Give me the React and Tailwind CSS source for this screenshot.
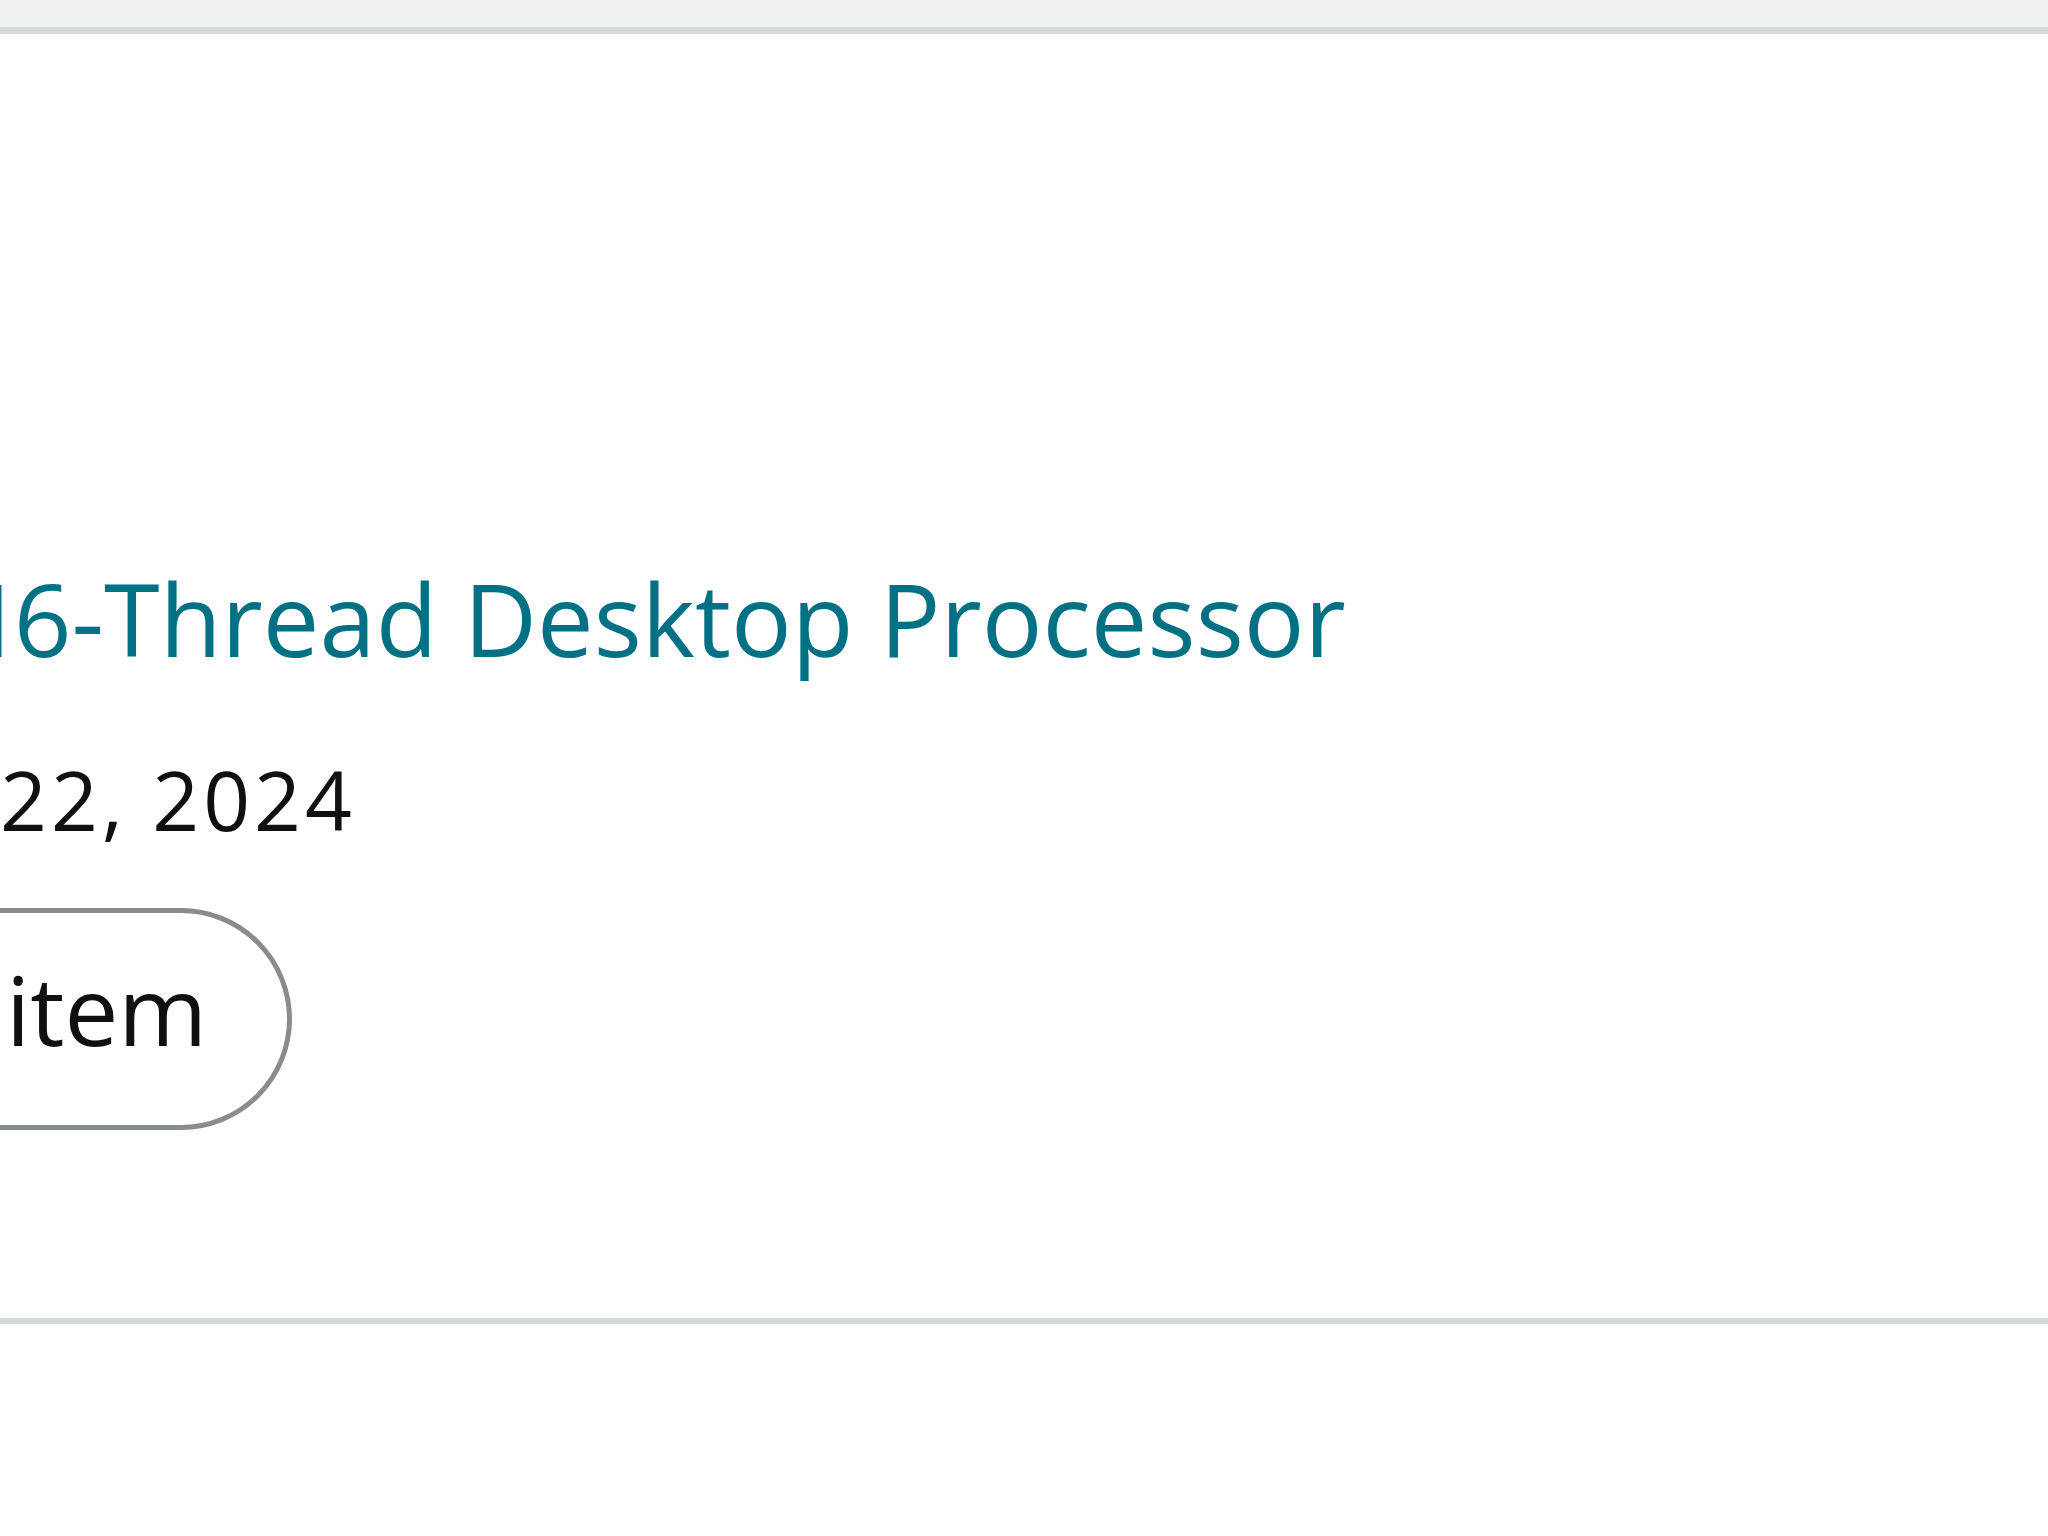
import React from "react";

const App = () => {
  return (
    <main className="w-[2048px] h-[1536px] overflow-hidden bg-white font-['Open_Sans',sans-serif]">
      <div className="h-[34px] bg-[#f0f2f2] border-b-[7px] border-[#d5d9d9]"></div>

      <section className="h-[1290px] border-b-[6px] border-[#d5d9d9] pt-[519px] flex flex-col items-start">
        <a className="block -ml-[34px] whitespace-nowrap text-[101px] leading-[130px] text-[#007185]">
          <span className="tracking-[-10px]">1</span>6-Thread Desktop Processor
        </a>
        <p className="mt-[61px] whitespace-nowrap text-[82px] tracking-[4px] leading-[110px] text-[#0f1111]">
          22, 2024
        </p>
        <button className="mt-[54px] -ml-[120px] h-[222px] rounded-full border-[5px] border-[#888c8c] bg-white pl-[121px] pr-[80px] pt-[48px] pb-[68px] text-[96px] leading-[96px] text-[#0f1111]">
          item
        </button>
      </section>
    </main>
  );
};

export default App;
